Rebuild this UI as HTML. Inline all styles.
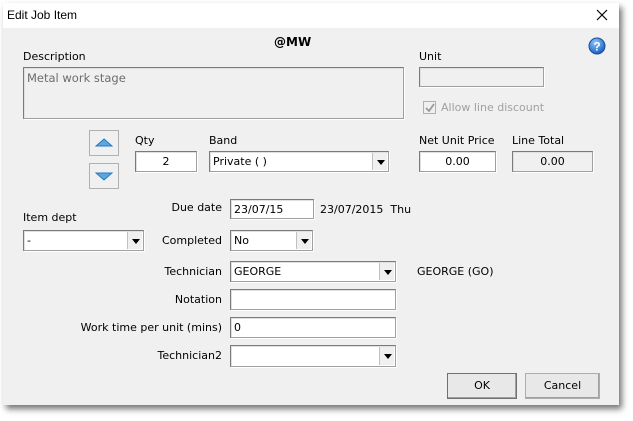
<!DOCTYPE html>
<html><head><style>
*{box-sizing:border-box;margin:0;padding:0}
body{width:633px;height:421px;background:#fff;font-family:"DejaVu Sans","Liberation Sans",sans-serif;font-size:11px;color:#000;position:relative;overflow:hidden}
#dlg{position:absolute;left:3px;top:3px;width:616px;height:402px;background:#f0f0f0;box-shadow:3px 4px 6px rgba(0,0,0,.55);}
#title{position:absolute;left:0;top:0;width:616px;height:25px;background:#fff}
.a{position:absolute;white-space:nowrap}
.box{position:absolute;background:#fff;border:1px solid #a0a0a0;border-top-color:#7a7a7a;border-left-color:#7a7a7a;box-shadow:inset 1px 1px 0 #e0e0e0, 1px 1px 0 #fff;padding:4px 3px 2px;line-height:12px}
.gray{background:#f0f0f0}
.sel .dd{position:absolute;right:1px;top:1px;bottom:1px;width:15px;background:#f0f0f0;border-left:1px solid #c0c0c0}
.sel .dd:after{content:"";position:absolute;left:4px;top:7px;border-left:4px solid transparent;border-right:4px solid transparent;border-top:5px solid #000}
.btn{position:absolute;border:1px solid #707070;background:#e8e8e8;box-shadow:inset -1px -1px 0 #a0a0a0;text-align:center;line-height:23px}
.r{text-align:right}
</style></head><body>
<div id="dlg">
<div id="title"></div>
</div>
<div class="a" style="left:7px;top:8px;font-size:12px;font-family:'Liberation Sans',sans-serif">Edit Job Item</div>
<svg class="a" style="left:596px;top:9px" width="12" height="12"><path d="M1 1L11 11M11 1L1 11" stroke="#000" stroke-width="1.2"/></svg>
<div class="a" style="left:274px;top:35px;font-weight:bold;font-size:12px">@MW</div>
<svg class="a" style="left:588px;top:37px" width="18" height="18"><defs><radialGradient id="g" cx=".4" cy=".3" r=".7"><stop offset="0" stop-color="#8cc8ff"/><stop offset="1" stop-color="#1c5fc0"/></radialGradient></defs><circle cx="9" cy="9" r="8" fill="url(#g)" stroke="#1a4d9a"/><text x="9" y="13.5" font-size="12" font-weight="bold" fill="#fff" text-anchor="middle" font-family="Liberation Sans">?</text></svg>
<div class="a" style="left:23px;top:50px">Description</div>
<div class="box gray" style="left:23px;top:67px;width:381px;height:52px;color:#6d6d6d;font-size:11.5px">Metal work stage</div>
<div class="a" style="left:419px;top:50px">Unit</div>
<div class="box gray" style="left:419px;top:67px;width:125px;height:20px"></div>
<div class="a" style="left:423px;top:101px;width:13px;height:13px;border:1px solid #b0b0b0;background:#f0f0f0"></div>
<svg class="a" style="left:425px;top:103px" width="10" height="10"><path d="M1 5L4 8L9 1" stroke="#9a9a9a" stroke-width="1.8" fill="none"/></svg>
<div class="a" style="left:441px;top:101px;color:#a0a0a0">Allow line discount</div>
<div class="btn" style="left:89px;top:130px;width:30px;height:26px;background:#f0f0f0;border-color:#b0b0b0;box-shadow:none"></div>
<svg class="a" style="left:95px;top:138px" width="18" height="10"><path d="M9 1L17 8H1Z" fill="#5aa8e0" stroke="#2a78c0"/></svg>
<div class="btn" style="left:89px;top:163px;width:30px;height:26px;background:#f0f0f0;border-color:#b0b0b0;box-shadow:none"></div>
<svg class="a" style="left:95px;top:172px" width="18" height="10"><path d="M1 1H17L9 8Z" fill="#5aa8e0" stroke="#2a78c0"/></svg>
<div class="a" style="left:135px;top:134px">Qty</div>
<div class="box" style="left:135px;top:151px;width:62px;height:21px;text-align:center">2</div>
<div class="a" style="left:209px;top:134px">Band</div>
<div class="box sel" style="left:209px;top:151px;width:180px;height:21px">Private ( )<div class="dd"></div></div>
<div class="a" style="left:419px;top:134px">Net Unit Price</div>
<div class="box" style="left:419px;top:151px;width:77px;height:21px;text-align:center">0.00</div>
<div class="a" style="left:512px;top:134px">Line Total</div>
<div class="box gray" style="left:512px;top:151px;width:81px;height:21px;text-align:center">0.00</div>
<div class="a r" style="left:100px;width:122px;top:201px">Due date</div>
<div class="box" style="left:230px;top:199px;width:84px;height:20px">23/07/15</div>
<div class="a" style="left:320px;top:203px">23/07/2015&nbsp; Thu</div>
<div class="a" style="left:23px;top:211px">Item dept</div>
<div class="box sel" style="left:23px;top:230px;width:121px;height:21px">-<div class="dd"></div></div>
<div class="a r" style="left:100px;width:122px;top:234px">Completed</div>
<div class="box sel" style="left:230px;top:230px;width:83px;height:21px">No<div class="dd"></div></div>
<div class="a r" style="left:60px;width:162px;top:265px">Technician</div>
<div class="box sel" style="left:230px;top:261px;width:166px;height:21px">GEORGE<div class="dd"></div></div>
<div class="a" style="left:417px;top:265px">GEORGE (GO)</div>
<div class="a r" style="left:60px;width:162px;top:293px">Notation</div>
<div class="box" style="left:230px;top:289px;width:166px;height:21px"></div>
<div class="a r" style="left:40px;width:182px;top:321px">Work time per unit (mins)</div>
<div class="box" style="left:230px;top:317px;width:166px;height:21px">0</div>
<div class="a r" style="left:60px;width:162px;top:349px">Technician2</div>
<div class="box sel" style="left:230px;top:345px;width:166px;height:22px"><div class="dd"></div></div>
<div class="btn" style="left:447px;top:373px;width:70px;height:26px">OK</div>
<div class="btn" style="left:525px;top:373px;width:75px;height:26px;border-color:#adadad">Cancel</div>
</body></html>
